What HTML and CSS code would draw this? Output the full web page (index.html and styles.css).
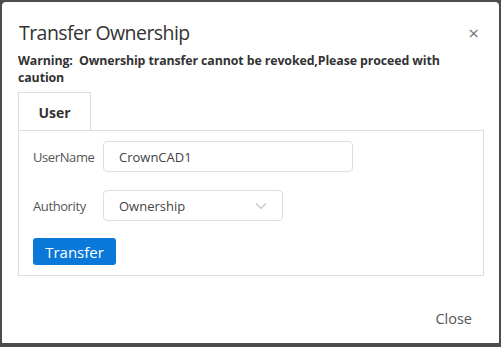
FILE: index.html
```html
<!DOCTYPE html>
<html lang="en">
<head>
    <meta charset="UTF-8">
    <title>Transfer Ownership</title>
    <link rel="stylesheet" href="styles.css">
</head>
<body>

    <!-- Dialog -->
    <div class="dialog">
        <div class="dialog-header">
            <h2>Transfer Ownership</h2>
            <span class="close-x">&times;</span>
        </div>
        <p class="warning">Warning:&nbsp; Ownership transfer cannot be revoked,Please proceed with caution</p>

        <!-- Tabs -->
        <div class="tabs">
            <div class="tab active">User</div>
        </div>
        <div class="tab-panel">
            <div class="row">
                <label for="userName">UserName</label>
                <input type="text" id="userName" class="field field-name" value="CrownCAD1">
            </div>
            <div class="row">
                <label>Authority</label>
                <div class="field field-select">
                    <span>Ownership</span>
                    <svg width="12" height="8" viewBox="0 0 12 8"><path d="M1 1.5 L6 6.5 L11 1.5" fill="none" stroke="#c0c4cc" stroke-width="1.1"/></svg>
                </div>
            </div>
            <button class="btn-primary">Transfer</button>
        </div>

        <div class="dialog-footer">
            <button class="btn-text">Close</button>
        </div>
    </div>

</body>
</html>
```

FILE: styles.css
```css
/* Reset */
body, h2, p, label, input, button {
    margin: 0;
    padding: 0;
    font-family: "Open Sans", "Noto Sans", sans-serif;
}
body {
    background-color: #4d4d4d;
    padding: 2px;
    height: 343px;
    box-sizing: border-box;
}
.dialog {
    background-color: #fff;
    border-radius: 4px;
    height: 343px;
    box-sizing: border-box;
    padding: 16px 16px 0 16px;
    display: flex;
    flex-direction: column;
}
.dialog-header {
    display: flex;
    justify-content: space-between;
    align-items: center;
    padding-left: 1px;
}
.dialog-header h2 {
    font-size: 19.5px;
    font-weight: normal;
    letter-spacing: -0.55px;
    color: #333;
    line-height: 30px;
}
.close-x {
    color: #777;
    font-size: 19px;
    margin-right: 4px;
}
.warning {
    margin-top: 4px;
    font-size: 12.4px;
    font-weight: bold;
    letter-spacing: -0.12px;
    color: #333;
    line-height: 17px;
}
.tabs {
    display: flex;
    margin-top: 6px;
}
.tab {
    width: 73px;
    height: 39px;
    border: 1px solid #ddd;
    border-bottom: none;
    box-sizing: border-box;
    text-align: center;
    line-height: 40px;
    font-size: 14px;
    font-weight: bold;
    color: #333;
    background: #fff;
}
.tab-panel {
    width: 466px;
    height: 146px;
    border: 1px solid #ddd;
    margin-top: -1px;
    box-sizing: border-box;
    padding: 10px 14px;
    display: flex;
    flex-direction: column;
    gap: 18px;
}
.row {
    display: flex;
    align-items: center;
}
.row label {
    width: 70px;
    font-size: 13px;
    letter-spacing: -0.4px;
    color: #555;
}
.field {
    height: 31px;
    border: 1px solid #dcdfe6;
    border-radius: 4px;
    box-sizing: border-box;
    padding: 0 15px;
    font-size: 13px;
    color: #444;
    font-family: "Open Sans", "Noto Sans", sans-serif;
}
.field-name {
    width: 250px;
    outline: none;
}
.field-select {
    width: 180px;
    display: flex;
    align-items: center;
    justify-content: space-between;
}
.btn-primary {
    align-self: flex-start;
    width: 83px;
    height: 30px;
    margin-top: -1px;
    background-color: #0a78d8;
    color: #fff;
    border: none;
    border-radius: 3px;
    font-size: 15px;
}
.dialog-footer {
    display: flex;
    justify-content: flex-end;
    padding-top: 33px;
    padding-right: 11px;
}
.btn-text {
    background: none;
    border: none;
    font-size: 14.5px;
    color: #555;
}
```
